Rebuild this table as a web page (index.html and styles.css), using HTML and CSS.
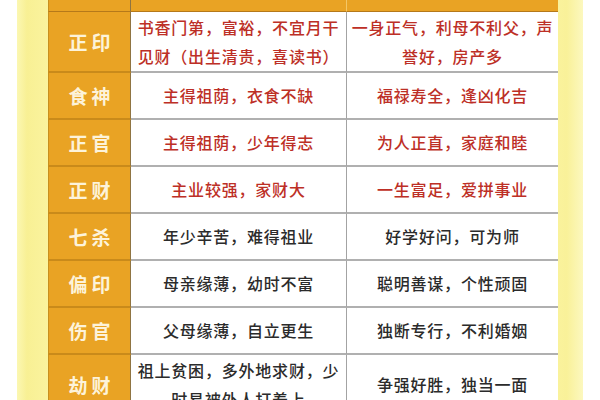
FILE: index.html
```html
<!DOCTYPE html>
<html lang="zh-CN">
<head>
<meta charset="utf-8">
<link rel="stylesheet" href="styles.css">
</head>
<body>
<div class="page">
  <div class="strip">
    <div class="table">
      <div class="cell head name"></div>
      <div class="cell head mid"></div>
      <div class="cell head right"></div>

      <div class="cell name">正印</div>
      <div class="cell mid red">书香门第，富裕，不宜月干<br>见财（出生清贵，喜读书）</div>
      <div class="cell right red">一身正气，利母不利父，声<br>誉好，房产多</div>

      <div class="cell name">食神</div>
      <div class="cell mid red">主得祖荫，衣食不缺</div>
      <div class="cell right red">福禄寿全，逢凶化吉</div>

      <div class="cell name">正官</div>
      <div class="cell mid red">主得祖荫，少年得志</div>
      <div class="cell right red">为人正直，家庭和睦</div>

      <div class="cell name">正财</div>
      <div class="cell mid red">主业较强，家财大</div>
      <div class="cell right red">一生富足，爱拼事业</div>

      <div class="cell name">七杀</div>
      <div class="cell mid">年少辛苦，难得祖业</div>
      <div class="cell right">好学好问，可为师</div>

      <div class="cell name">偏印</div>
      <div class="cell mid">母亲缘薄，幼时不富</div>
      <div class="cell right">聪明善谋，个性顽固</div>

      <div class="cell name">伤官</div>
      <div class="cell mid">父母缘薄，自立更生</div>
      <div class="cell right">独断专行，不利婚姻</div>

      <div class="cell name">劫财</div>
      <div class="cell mid">祖上贫困，多外地求财，少<br>时易被外人打着上</div>
      <div class="cell right">争强好胜，独当一面</div>
    </div>
  </div>
</div>
</body>
</html>
```

FILE: styles.css
```css
html, body {
  margin: 0;
  padding: 0;
  background: #ffffff;
  overflow: hidden;
}

.page {
  width: 600px;
  height: 400px;
  padding-left: 17px;
  box-sizing: border-box;
}

.strip {
  width: 566px;
  height: 400px;
  background: linear-gradient(90deg, #fbf7b2 0px, #f8f094 10px, #faf39e 31px, #faf39e 535px, #f9f199 550px, #fcf8bf 566px);
  padding-left: 31px;
  box-sizing: border-box;
}

.table {
  width: 510px;
  display: grid;
  grid-template-columns: 83px 216px 211px;
  grid-template-rows: 12px 61px 47px 47px 47px 47px 47px 47px 61px;
  background: #ffffff;
  font-family: "Noto Sans CJK SC", "Noto Sans", sans-serif;
}

.cell {
  box-sizing: border-box;
  display: flex;
  align-items: center;
  justify-content: center;
  text-align: center;
  border-bottom: 2px solid #b0b0b0;
  font-size: 16px;
  line-height: 29px;
  letter-spacing: 0.8px;
  color: #2b2b2b;
  font-weight: 500;
}

.name {
  background: #e9a324;
  color: #fdf3da;
  font-size: 19px;
  font-weight: 700;
  letter-spacing: 4px;
  padding-left: 4px;
  border-bottom-color: #c98a1a;
  border-left: 1px solid #c8901e;
  border-right: 1px solid #8f7442;
}

.mid {
  border-right: 1px solid #a3a3a3;
  padding: 0 2px;
}

.right {
  padding: 0 2px;
}

.head {
  background: #e9a324;
  border-bottom: 1px solid #b5791a;
}

.head.mid {
  border-right: 1px solid #f4c766;
}

.red {
  color: #bd2f26;
}
```
